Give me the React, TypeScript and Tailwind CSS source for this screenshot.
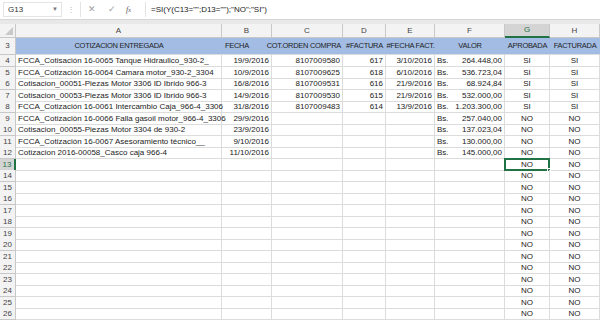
import React from "react";

type Row = {
  n: number;
  a?: string;
  b?: string;
  c?: string;
  d?: string;
  e?: string;
  f?: string;
  g?: string;
  h?: string;
};

const rows: Row[] = [
  { n: 4, a: "FCCA_Cotisación 16-0065 Tanque Hidraulico_930-2_", b: "19/9/2016", c: "8107009580", d: "617", e: "3/10/2016", f: "264.448,00", g: "SI", h: "SI" },
  { n: 5, a: "FCCA_Cotización 16-0064 Camara motor_930-2_3304", b: "10/9/2016", c: "8107009625", d: "618", e: "6/10/2016", f: "536.723,04", g: "SI", h: "SI" },
  { n: 6, a: "Cotisacion_00051-Piezas Motor 3306 ID Ibrido 966-3", b: "16/8/2016", c: "8107009531", d: "616", e: "21/9/2016", f: "68.924,84", g: "SI", h: "SI" },
  { n: 7, a: "Cotisacion_00053-Piezas Motor 3306 ID Ibrido 966-3", b: "14/9/2016", c: "8107009530", d: "615", e: "21/9/2016", f: "532.000,00", g: "SI", h: "SI" },
  { n: 8, a: "FCCA_Cotización 16-0061 Intercambio Caja_966-4_3306", b: "31/8/2016", c: "8107009483", d: "614", e: "13/9/2016", f: "1.203.300,00", g: "SI", h: "SI" },
  { n: 9, a: "FCCA_Cotización 16-0066 Falla gasoil motor_966-4_3306", b: "29/9/2016", f: "257.040,00", g: "NO", h: "NO" },
  { n: 10, a: "Cotisacion_00055-Piezas Motor 3304 de 930-2", b: "23/9/2016", f: "137.023,04", g: "NO", h: "NO" },
  { n: 11, a: "FCCA_Cotización 16-0067 Asesoramiento técnico__", b: "9/10/2016", f: "130.000,00", g: "NO", h: "NO" },
  { n: 12, a: "Cotizacion 2016-00058_Casco caja 966-4", b: "11/10/2016", f: "145.000,00", g: "NO", h: "NO" },
];
for (let n = 13; n <= 26; n++) rows.push({ n, g: "NO", h: "NO" });

const cols = "grid grid-cols-[16px_206px_50px_71px_43px_49px_70px_45px_50px]";
const cell = "border-r border-b border-[#dcdcdc] overflow-hidden whitespace-nowrap leading-[11px] px-[2px]";
const hdr = "bg-[#a2bce4] flex items-center border-b border-[#dcdcdc] whitespace-nowrap";

export default function App() {
  return (
    <div
      className="w-[600px] h-[320px] overflow-hidden bg-white text-[#222]"
      style={{ fontFamily: '"Liberation Sans", Arial, sans-serif' }}
    >
      {/* formula bar */}
      <div className="h-[19px] flex items-center bg-white text-[8px] text-[#333]">
        <div className="ml-[3px] w-[59px] h-[15px] flex items-center justify-between pl-[4px] pr-[3px] border border-[#e4e4e4]">
          <span>G13</span>
          <span className="text-[6px] text-[#777]">▼</span>
        </div>
        <div className="w-[18px] flex justify-center text-[#b5b5b5] text-[8px] leading-none">⋮</div>
        <div className="w-[65px] h-[15px] flex items-center pl-[7px] border-l border-[#e4e4e4]">
          <span className="w-[20px] text-[#a0a0a0] text-[9px]">✕</span>
          <span className="w-[18px] text-[#a0a0a0] text-[9px]">✓</span>
          <span className="text-[#555] text-[8px] italic" style={{ fontFamily: '"Liberation Serif", serif' }}>
            f<span className="text-[6px]">x</span>
          </span>
        </div>
        <div className="flex-1 h-[15px] flex items-center pl-[5px] border-l border-[#e4e4e4] text-[#222] text-[8px]">
          =SI(Y(C13="";D13="");"NO";"SI")
        </div>
      </div>
      <div className="h-[5px] bg-[#e8e8e8] border-t border-[#d6d6d6]" />

      {/* column headers */}
      <div className={`${cols} h-[14px] bg-[#f3f3f3] text-[8px] text-[#444]`}>
        <div className="border-r border-b border-[#c8c8c8] relative">
          <svg width="8" height="8" className="absolute right-[2px] bottom-[2px]">
            <polygon points="8,0 8,8 0,8" fill="#c9c9c9" />
          </svg>
        </div>
        {["A", "B", "C", "D", "E", "F", "G", "H"].map((l) => (
          <div
            key={l}
            className={
              l === "G"
                ? "flex items-center justify-center border-r border-[#c8c8c8] bg-[#d4d4d4] border-b-2 border-b-[#217346] text-[#217346]"
                : "flex items-center justify-center border-r border-b border-[#c8c8c8]"
            }
          >
            {l}
          </div>
        ))}
      </div>

      {/* row 3 header */}
      <div className={`${cols} h-[17px] text-[7.5px] tracking-[-0.3px] text-[#1f1f1f]`}>
        <div className="bg-[#f3f3f3] border-r border-b border-[#c8c8c8] flex items-end justify-center pb-[2px] text-[8px] tracking-normal text-[#444]">3</div>
        <div className={`${hdr} justify-center`}>COTIZACION ENTREGADA</div>
        <div className={`${hdr} pl-[3px]`}>FECHA</div>
        <div className={`${hdr} justify-end pr-[2px]`}>COT.ORDEN COMPRA</div>
        <div className={`${hdr} justify-center`}>#FACTURA</div>
        <div className={`${hdr} justify-center`}>#FECHA FACT.</div>
        <div className={`${hdr} justify-center`}>VALOR</div>
        <div className={`${hdr} justify-center`}>APROBADA</div>
        <div className={`${hdr} justify-center`}>FACTURADA</div>
      </div>

      {/* data rows */}
      {rows.map((r) => {
        const sel = r.n === 13;
        return (
          <div key={r.n} className={`${cols} h-[11.5px] text-[8px]`}>
            <div
              className={
                sel
                  ? "bg-[#d4d4d4] border-r-2 border-r-[#217346] border-b border-[#c8c8c8] text-[#217346] text-center leading-[11px]"
                  : "bg-[#f3f3f3] border-r border-b border-[#c8c8c8] text-[#444] text-center leading-[11px]"
              }
            >
              {r.n}
            </div>
            <div className={`${cell} overflow-visible`}>{r.a ?? ""}</div>
            <div className={`${cell} text-right`}>{r.b ?? ""}</div>
            <div className={`${cell} text-right`}>{r.c ?? ""}</div>
            <div className={`${cell} text-right`}>{r.d ?? ""}</div>
            <div className={`${cell} text-right`}>{r.e ?? ""}</div>
            <div className={`${cell} flex justify-between`}>
              <span>{r.f ? "Bs." : ""}</span>
              <span>{r.f ?? ""}</span>
            </div>
            <div className={`${cell} text-center relative overflow-visible`}>
              {r.g ?? ""}
              {sel && (
                <div className="absolute left-[-1px] top-[-1px] right-[-1px] bottom-[-1px] border-2 border-[#217346] pointer-events-none">
                  <div className="absolute right-[-3px] bottom-[-3px] w-[4px] h-[4px] bg-[#217346] border border-white" />
                </div>
              )}
            </div>
            <div className={`${cell} text-center`}>{r.h ?? ""}</div>
          </div>
        );
      })}
    </div>
  );
}
